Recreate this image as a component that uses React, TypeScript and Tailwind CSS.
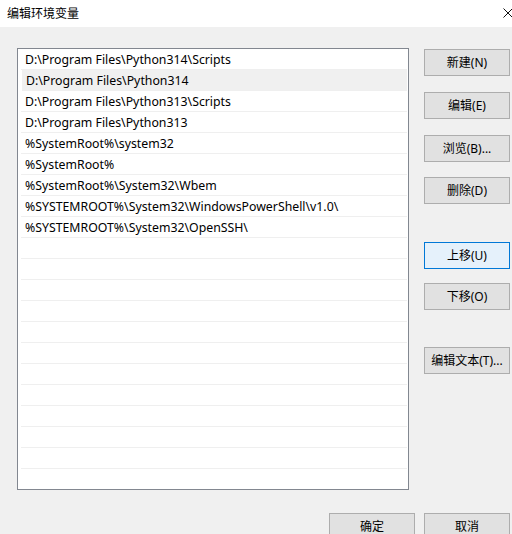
const paths = [
  'D:\\Program Files\\Python314\\Scripts',
  'D:\\Program Files\\Python314',
  'D:\\Program Files\\Python313\\Scripts',
  'D:\\Program Files\\Python313',
  '%SystemRoot%\\system32',
  '%SystemRoot%',
  '%SystemRoot%\\System32\\Wbem',
  '%SYSTEMROOT%\\System32\\WindowsPowerShell\\v1.0\\',
  '%SYSTEMROOT%\\System32\\OpenSSH\\',
];

const selected = 1;
const rowCount = 21;

const font = { fontFamily: '"Noto Sans", "Noto Sans CJK SC", sans-serif' };

function Btn({ label, focus, className = '' }: { label: string; focus?: boolean; className?: string }) {
  return (
    <button
      className={
        'h-[27px] w-[86px] shrink-0 border text-[12px] leading-none text-black ' +
        (focus ? 'border-[#0078d7] bg-[#e5f1fb] ' : 'border-[#adadad] bg-[#e1e1e1] ') +
        className
      }
    >
      {label}
    </button>
  );
}

export default function App() {
  const rows = Array.from({ length: rowCount }, (_, i) => paths[i] ?? '');

  return (
    <div className="w-[512px] h-[534px] overflow-hidden bg-[#f0f0f0] text-black" style={font}>
      {/* title bar */}
      <div className="h-[27px] bg-white flex items-center justify-between pl-[7px]">
        <span className="text-[12px] leading-none">编辑环境变量</span>
        <svg width="10" height="10" viewBox="0 0 10 10" className="mr-[-1px] mt-[-2px]">
          <path d="M0.5 0.5 L9.5 9.5 M9.5 0.5 L0.5 9.5" stroke="#111" strokeWidth="1" />
        </svg>
      </div>

      <div className="flex pl-[17px] pt-[21px]">
        {/* path list */}
        <div className="w-[392px] h-[442px] border border-[#828790] bg-white overflow-hidden pl-[3px] pr-[1px]">
          {rows.map((p, i) => (
            <div
              key={i}
              className={
                'h-[21px] flex items-center pl-[4px] pt-[2px] border-b border-[#efefef] text-[12.3px] leading-none whitespace-nowrap ' +
                (i === selected ? 'bg-[#f0f0f0] ml-[1px]' : '')
              }
            >
              {p}
            </div>
          ))}
        </div>

        {/* action buttons */}
        <div className="flex flex-col ml-[15px] pt-[1px]">
          <Btn label="新建(N)" />
          <Btn label="编辑(E)" className="mt-[16px]" />
          <Btn label="浏览(B)..." className="mt-[16px]" />
          <Btn label="删除(D)" className="mt-[15px]" />
          <Btn label="上移(U)" focus className="mt-[38px]" />
          <Btn label="下移(O)" className="mt-[14px]" />
          <Btn label="编辑文本(T)..." className="mt-[37px]" />
        </div>
      </div>

      {/* dialog buttons */}
      <div className="flex justify-end gap-[9px] pr-[2px] mt-[23px]">
        <Btn label="确定" />
        <Btn label="取消" />
      </div>
    </div>
  );
}
